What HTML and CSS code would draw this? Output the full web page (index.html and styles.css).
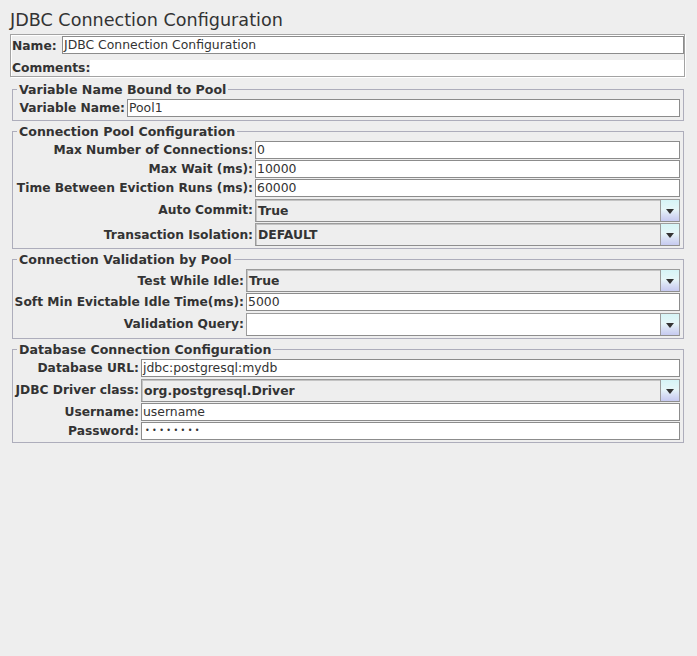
FILE: index.html
```html
<!DOCTYPE html>
<html>
<head>
<meta charset="utf-8">
<link rel="stylesheet" href="styles.css">
</head>
<body>
<div class="page">
  <div class="title">JDBC Connection Configuration</div>
  <div class="name-panel">
    <div class="np-row r-name"><span class="np-label w-name">Name:</span><div class="tf grow">JDBC Connection Configuration</div></div>
    <div class="np-row r-comments"><span class="np-label w-comments">Comments:</span><div class="ta grow"></div></div>
  </div>

  <fieldset class="group first">
    <legend>Variable Name Bound to Pool</legend>
    <div class="form lw1">
      <span class="lbl"><span>Variable Name:</span></span><div class="tf">Pool1</div>
    </div>
  </fieldset>

  <fieldset class="group tight">
    <legend>Connection Pool Configuration</legend>
    <div class="form lw2">
      <span class="lbl"><span>Max Number of Connections:</span></span><div class="tf">0</div>
      <span class="lbl"><span>Max Wait (ms):</span></span><div class="tf">10000</div>
      <span class="lbl"><span>Time Between Eviction Runs (ms):</span></span><div class="tf">60000</div>
      <span class="lbl"><span>Auto Commit:</span></span><div class="combo"><div class="val">True</div><div class="btn"><span class="tri"></span></div></div>
      <span class="lbl"><span>Transaction Isolation:</span></span><div class="combo"><div class="val">DEFAULT</div><div class="btn"><span class="tri"></span></div></div>
    </div>
  </fieldset>

  <fieldset class="group tight">
    <legend>Connection Validation by Pool</legend>
    <div class="form lw3">
      <span class="lbl"><span>Test While Idle:</span></span><div class="combo"><div class="val">True</div><div class="btn"><span class="tri"></span></div></div>
      <span class="lbl"><span>Soft Min Evictable Idle Time(ms):</span></span><div class="tf">5000</div>
      <span class="lbl"><span>Validation Query:</span></span><div class="combo editable"><div class="val"></div><div class="btn"><span class="tri"></span></div></div>
    </div>
  </fieldset>

  <fieldset class="group tight">
    <legend>Database Connection Configuration</legend>
    <div class="form lw4">
      <span class="lbl"><span>Database URL:</span></span><div class="tf">jdbc:postgresql:mydb</div>
      <span class="lbl"><span>JDBC Driver class:</span></span><div class="combo"><div class="val">org.postgresql.Driver</div><div class="btn"><span class="tri"></span></div></div>
      <span class="lbl"><span>Username:</span></span><div class="tf">username</div>
      <span class="lbl"><span>Password:</span></span><div class="tf pw">••••••••</div>
    </div>
  </fieldset>
</div>
</body>
</html>
```
FILE: styles.css
```css
* { box-sizing: border-box; }
html, body { margin: 0; background: #eeeeee; }
body {
  font-family: "DejaVu Sans", sans-serif;
  color: #333333;
  width: 697px;
  height: 656px;
  overflow: hidden;
}
.page { padding-left: 10px; width: 686px; }
.title {
  font-size: 17.6px;
  line-height: 20px;
  height: 34px;
  padding: 10px 0 4px;
  white-space: nowrap;
}
.name-panel {
  margin-right: 1px;
  height: 43px;
  border: 1px solid #a3a3a3;
  box-shadow: inset 1px 1px 0 #ffffff, 1px 1px 0 #ffffff;
  padding: 1px 0 0 1px;
}
.np-row { display: flex; align-items: center; }
.r-name { height: 18px; margin-bottom: 6px; }
.r-comments { height: 16px; }
.np-label { font-weight: bold; font-size: 12.3px; line-height: 14px; flex: none; white-space: nowrap; }
.r-name .np-label { padding-top: 1px; }
.w-name { width: 50px; }
.w-comments { width: 78px; }
.grow { flex: 1; }
.tf {
  height: 18px;
  border: 1px solid #8c8c8c;
  background: #ffffff;
  font-size: 12.4px;
  line-height: 16px;
  padding-left: 1px;
  white-space: nowrap;
  overflow: hidden;
  color: #333333;
}
.tf.pw { font-size: 8px; letter-spacing: 2.4px; padding-left: 3px; }
.ta { height: 16px; background: #ffffff; }

.group {
  margin: 3px 2px 0;
  padding: 0 3px 3px;
  border: 1px solid #adadbb;
  min-width: 0;
}
.group.tight { padding-bottom: 2px; }
.group.first { margin-top: 5px; }
.group legend {
  font-weight: bold;
  font-size: 12.6px;
  line-height: 15px;
  padding: 0 2px;
  margin-left: 1px;
  white-space: nowrap;
}
.form {
  display: grid;
  row-gap: 1px;
  align-items: center;
  padding-top: 2px;
}
.lw1 { grid-template-columns: 111px 1fr; }
.lw2 { grid-template-columns: 239px 1fr; }
.lw3 { grid-template-columns: 230px 1fr; }
.lw4 { grid-template-columns: 125px 1fr; }
.lbl {
  display: flex;
  justify-content: flex-end;
  min-width: 0;
  font-weight: bold;
  font-size: 12.25px;
  line-height: 14px;
  padding-right: 2px;
  white-space: nowrap;
}
.lbl > span { flex: none; }
.tf + .lbl + .combo { margin-top: 1px; }
.combo {
  height: 23px;
  display: flex;
  border: 1px solid #9c9c9c;
  border-bottom-color: #8e8e8e;
  background: #eeeeee;
  box-shadow: inset 1px 1px 0 #c4c4c4;
}
.combo .val {
  flex: 1;
  font-weight: bold;
  font-size: 12.4px;
  line-height: 22px;
  padding-left: 2px;
  white-space: nowrap;
}
.combo.editable .val { background: #ffffff; }
.combo .btn {
  width: 19px;
  flex: none;
  border-left: 1px solid #9c9c9c;
  background: linear-gradient(#d6f4f6 0%, #e6f6f8 45%, #d8e0f4 70%, #c6caf0 100%);
  display: flex;
  align-items: center;
  justify-content: center;
}
.tri {
  width: 0;
  height: 0;
  border-left: 4.5px solid transparent;
  border-right: 4.5px solid transparent;
  border-top: 5px solid #333333;
  margin-top: 1px;
}
```
